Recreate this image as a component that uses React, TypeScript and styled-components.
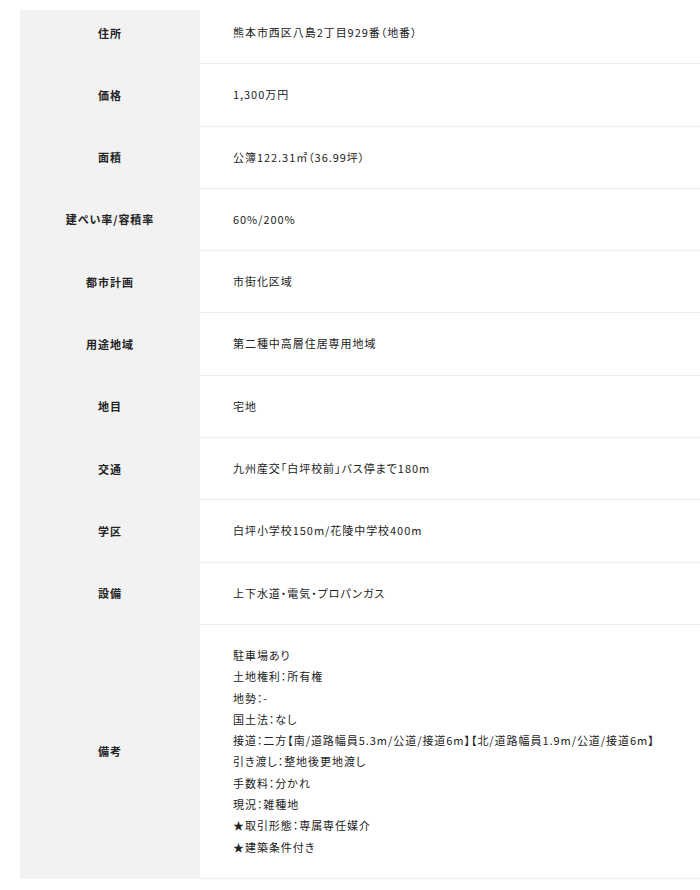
import React from "react";
import styled, { createGlobalStyle } from "styled-components";

const GlobalStyle = createGlobalStyle`
  body {
    margin: 0;
    background: #fff;
    font-family: "Noto Sans CJK JP", "Noto Sans", sans-serif;
    color: #222;
  }
`;

const Wrapper = styled.div`
  padding: 2px 0 0 20px;
`;

const Table = styled.dl`
  margin: 0;
  display: grid;
  grid-template-columns: 180px 1fr;
  font-size: 11px;
  line-height: 21.3px;
  letter-spacing: 0.95px;
  font-feature-settings: "palt";
`;

const Head = styled.dt<{ $first?: boolean }>`
  margin: 0;
  display: flex;
  align-items: center;
  justify-content: center;
  font-weight: 700;
  background: ${(p) =>
    p.$first ? "linear-gradient(#fff 8px, #f2f2f2 8px)" : "#f2f2f2"};
`;

const Data = styled.dd`
  margin: 0;
  padding: 20px 33px;
  border-bottom: 1px solid #eeeeee;
`;

const Line = styled.div`
  white-space: nowrap;
`;

const rows: { label: string; value: string[] }[] = [
  { label: "住所", value: ["熊本市西区八島2丁目929番（地番）"] },
  { label: "価格", value: ["1,300万円"] },
  { label: "面積", value: ["公簿122.31㎡（36.99坪）"] },
  { label: "建ぺい率/容積率", value: ["60%/200%"] },
  { label: "都市計画", value: ["市街化区域"] },
  { label: "用途地域", value: ["第二種中高層住居専用地域"] },
  { label: "地目", value: ["宅地"] },
  { label: "交通", value: ["九州産交「白坪校前」バス停まで180m"] },
  { label: "学区", value: ["白坪小学校150m/花陵中学校400m"] },
  { label: "設備", value: ["上下水道・電気・プロパンガス"] },
  {
    label: "備考",
    value: [
      "駐車場あり",
      "土地権利：所有権",
      "地勢：-",
      "国土法：なし",
      "接道：二方【南/道路幅員5.3m/公道/接道6m】【北/道路幅員1.9m/公道/接道6m】",
      "引き渡し：整地後更地渡し",
      "手数料：分かれ",
      "現況：雑種地",
      "★取引形態：専属専任媒介",
      "★建築条件付き",
    ],
  },
];

export default function App() {
  return (
    <>
      <GlobalStyle />
      <Wrapper>
        <Table>
          {rows.map((row, i) => (
            <React.Fragment key={row.label}>
              <Head $first={i === 0}>{row.label}</Head>
              <Data>
                {row.value.map((v) => (
                  <Line key={v}>{v}</Line>
                ))}
              </Data>
            </React.Fragment>
          ))}
        </Table>
      </Wrapper>
    </>
  );
}
